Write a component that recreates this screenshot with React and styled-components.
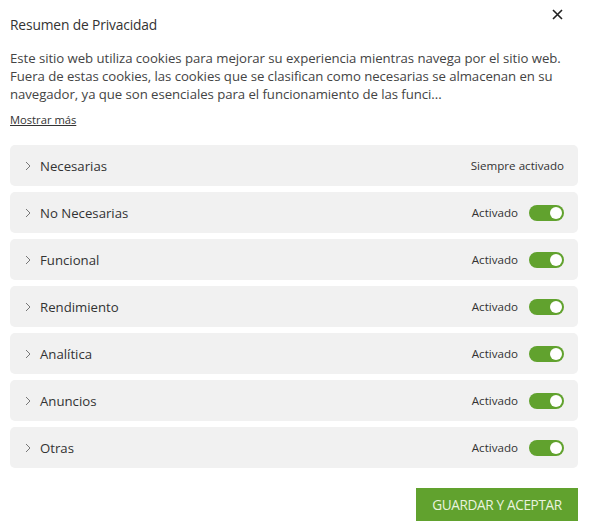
import React from 'react';
import styled, { createGlobalStyle } from 'styled-components';

const GlobalStyle = createGlobalStyle`
  body {
    margin: 0;
    background: #fff;
    font-family: "Open Sans", "Liberation Sans", sans-serif;
    color: #333;
  }
`;

const Modal = styled.div`
  position: relative;
  width: 593px;
  padding: 15px 15px 0 10px;
  box-sizing: border-box;
`;

const CloseBtn = styled.div`
  position: absolute;
  top: 7px;
  right: 29px;
  width: 14px;
  height: 14px;
  display: flex;
  align-items: center;
  justify-content: center;
`;

const Title = styled.h2`
  margin: 0;
  font-size: 13.8px;
  font-weight: 400;
  line-height: 20px;
  letter-spacing: -0.15px;
  color: #333;
`;

const Description = styled.p`
  margin: 14px 0 0;
  font-size: 13.2px;
  line-height: 18px;
  color: #444;
  letter-spacing: -0.05px;
`;

const MoreLink = styled.a`
  display: inline-block;
  margin-top: 9px;
  font-size: 11.2px;
  color: #333;
  text-decoration: underline;
`;

const List = styled.div`
  display: flex;
  flex-direction: column;
  gap: 6px;
  margin-top: 16px;
`;

const Row = styled.div`
  display: flex;
  align-items: center;
  height: 41px;
  background: #f1f1f1;
  border-radius: 5px;
  padding: 0 14px 0 15px;
`;

const Chevron = styled.span`
  display: flex;
  align-items: center;
  width: 15px;
`;

const Label = styled.span`
  flex: 1;
  font-size: 13.2px;
  color: #333;
`;

const Status = styled.span`
  font-size: 11.6px;
  color: #333;
`;

const Toggle = styled.span`
  position: relative;
  width: 35px;
  height: 16px;
  margin-left: 11px;
  border-radius: 8px;
  background: ${p => (p.on ? '#61a22e' : '#ccc')};
  &::after {
    content: '';
    position: absolute;
    top: 2px;
    right: 2px;
    width: 12px;
    height: 12px;
    border-radius: 50%;
    background: #fff;
  }
`;

const Footer = styled.div`
  display: flex;
  justify-content: flex-end;
  margin-top: 20px;
`;

const SaveBtn = styled.button`
  width: 162px;
  height: 33px;
  border: none;
  background: #61a22e;
  color: #e9f3df;
  font-family: "Open Sans", "Liberation Sans", sans-serif;
  font-size: 13.6px;
  letter-spacing: -0.35px;
`;

const categories = [
  'No Necesarias',
  'Funcional',
  'Rendimiento',
  'Analítica',
  'Anuncios',
  'Otras',
];

const ChevronIcon = () => (
  <Chevron>
    <svg width="6" height="10" viewBox="0 0 6 10">
      <path d="M1 1l4 4-4 4" fill="none" stroke="#777" strokeWidth="1" />
    </svg>
  </Chevron>
);

const App = () => {
  return (
    <Modal>
      <GlobalStyle />
      <CloseBtn>
        <svg width="11" height="11" viewBox="0 0 11 11">
          <path d="M1 1l9 9M10 1l-9 9" stroke="#222" strokeWidth="1.6" />
        </svg>
      </CloseBtn>
      <Title>Resumen de Privacidad</Title>
      <Description>
        Este sitio web utiliza cookies para mejorar su experiencia mientras navega por el sitio web.
        Fuera de estas cookies, las cookies que se clasifican como necesarias se almacenan en su
        navegador, ya que son esenciales para el funcionamiento de las funci...
      </Description>
      <MoreLink>Mostrar más</MoreLink>
      <List>
        <Row>
          <ChevronIcon />
          <Label>Necesarias</Label>
          <Status>Siempre activado</Status>
        </Row>
        {categories.map(name => (
          <Row key={name}>
            <ChevronIcon />
            <Label>{name}</Label>
            <Status>Activado</Status>
            <Toggle on />
          </Row>
        ))}
      </List>
      <Footer>
        <SaveBtn>GUARDAR Y ACEPTAR</SaveBtn>
      </Footer>
    </Modal>
  );
};

export default App;
